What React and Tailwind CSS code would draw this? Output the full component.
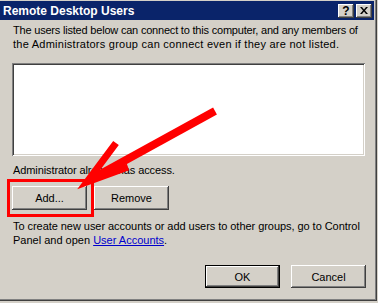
const raised =
  'shadow-[inset_-1px_-1px_0_#404040,inset_1px_1px_0_#ffffff,inset_-2px_-2px_0_#808080,inset_2px_2px_0_#d4d0c8]'

function WinButton({ children, isDefault }) {
  if (isDefault) {
    return (
      <div className="w-[75px] h-[23px] border border-black">
        <div className={`w-full h-full bg-[#d4d0c8] flex items-center justify-center ${raised}`}>
          {children}
        </div>
      </div>
    )
  }
  return (
    <div className={`w-[75px] h-[23px] bg-[#d4d0c8] flex items-center justify-center ${raised}`}>
      {children}
    </div>
  )
}

function Arrow() {
  return (
    <svg className="absolute left-0 top-0 pointer-events-none" width="378" height="303">
      <line x1="215" y1="111" x2="95" y2="177" stroke="#ff0000" strokeWidth="8" />
      <polyline
        points="116,143 87,182 128,167"
        fill="none"
        stroke="#ff0000"
        strokeWidth="7"
        strokeLinejoin="miter"
      />
    </svg>
  )
}

export default function App() {
  return (
    <div
      className="relative w-[378px] h-[303px] bg-[#d4d0c8] text-[11px] leading-[14px] text-black overflow-hidden"
      style={{ fontFamily: '"Liberation Sans", Arial, sans-serif' }}
    >
      <div className="w-[377px] h-[301px] border-r border-b border-[#404040]">
        <div className="w-full h-full border-r border-b border-[#808080] pt-[1px] flex flex-col">
          {/* title bar */}
          <div className="h-[19px] mr-[1px] bg-[#0a246a] flex items-center pl-[3px] pr-[2px]">
            <span className="flex-1 text-white font-bold text-[12px]">Remote Desktop Users</span>
            <div className={`w-[16px] h-[14px] bg-[#d4d0c8] flex items-center justify-center font-bold text-[12px] leading-none ${raised}`}>
              ?
            </div>
            <div className={`ml-[2px] w-[16px] h-[14px] bg-[#d4d0c8] flex items-center justify-center ${raised}`}>
              <svg width="8" height="7" viewBox="0 0 8 7">
                <path d="M0 0h2l2 2.5L6 0h2L5 3.5 8 7H6L4 4.5 2 7H0l3-3.5z" fill="#000" />
              </svg>
            </div>
          </div>

          <div className="pl-[13px] pt-[3px] whitespace-nowrap">
            <p className="tracking-[-0.2px]">
              The users listed below can connect to this computer, and any members of
            </p>
            <p className="tracking-[0.25px]">
              the Administrators group can connect even if they are not listed.
            </p>
          </div>

          <div className="ml-[12px] mt-[12px] w-[353px] h-[93px] bg-white shadow-[inset_1px_1px_0_#808080,inset_-1px_-1px_0_#ffffff,inset_2px_2px_0_#404040,inset_-2px_-2px_0_#d4d0c8]" />

          <p className="pl-[13px] mt-[7px] tracking-[-0.1px]">Administrator already has access.</p>

          <div className="flex gap-[7px] ml-[12px] mt-[9px]">
            <div className={`w-[75px] h-[24px] bg-[#d4d0c8] flex items-center justify-center ${raised}`}>
              Add...
            </div>
            <div className={`w-[75px] h-[24px] bg-[#d4d0c8] flex items-center justify-center ${raised}`}>
              Remove
            </div>
          </div>

          <div className="pl-[13px] mt-[9px] whitespace-nowrap">
            <p className="tracking-[-0.05px]">
              To create new user accounts or add users to other groups, go to Control
            </p>
            <p>
              Panel and open <span className="text-[#0000cc] underline">User Accounts</span>.
            </p>
          </div>

          <div className="flex justify-end gap-[11px] pr-[9px] mt-[18px]">
            <WinButton isDefault>OK</WinButton>
            <WinButton>Cancel</WinButton>
          </div>
        </div>
      </div>

      {/* annotation */}
      <div className="absolute left-[7px] top-[179px] w-[87px] h-[38px] border-[3px] border-[#ff0000] pointer-events-none" />
      <Arrow />
    </div>
  )
}
